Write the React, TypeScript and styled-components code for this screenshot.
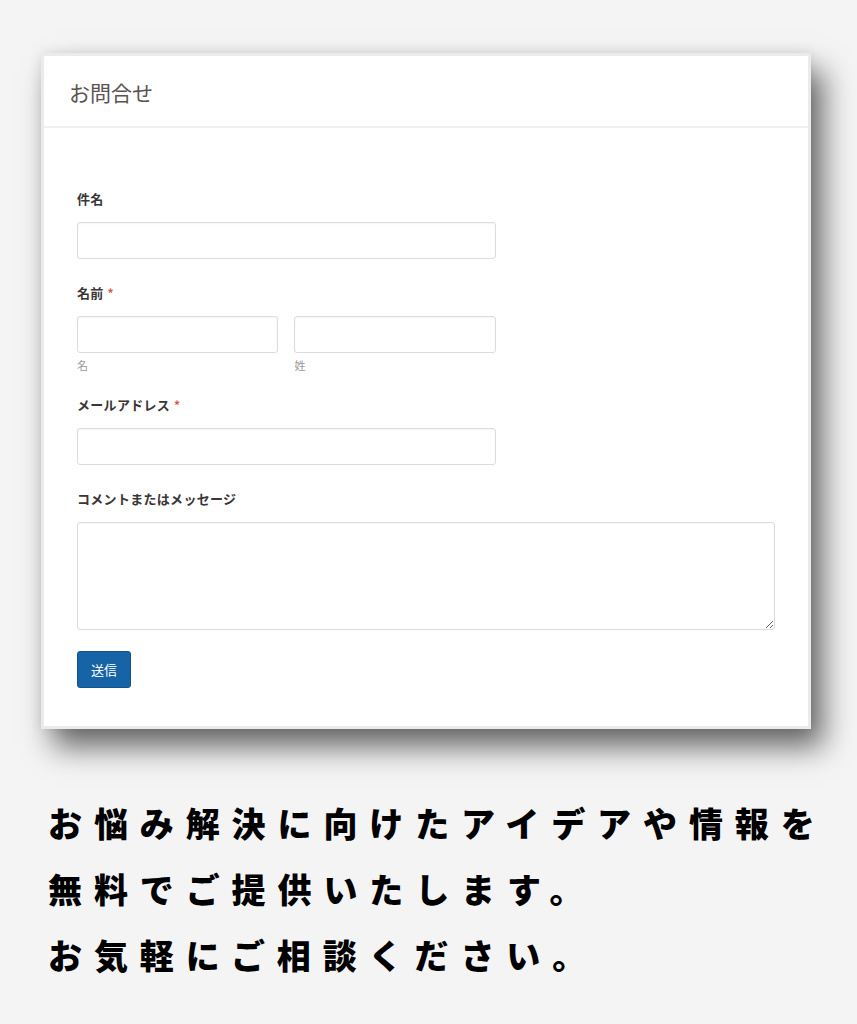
import React from "react";
import styled, { createGlobalStyle } from "styled-components";

const GlobalStyle = createGlobalStyle`
  html, body {
    margin: 0;
    padding: 0;
    background: #f4f4f4;
  }
  body {
    font-family: "Noto Sans CJK JP", "Noto Sans", sans-serif;
  }
  * { box-sizing: border-box; }
`;

const Page = styled.div`
  width: 857px;
  min-height: 1024px;
  padding: 53px 46px 0 41px;
  background: #f4f4f4;
`;

const Card = styled.section`
  background: #fff;
  border: 3px solid #ebebeb;
  box-shadow: 12px 18px 28px rgba(0, 0, 0, 0.58), 0 0 12px rgba(0, 0, 0, 0.08);
`;

const CardHeader = styled.header`
  height: 72px;
  display: flex;
  align-items: center;
  padding: 3px 25px 0;
  border-bottom: 2px solid #f0f0f0;
`;

const Title = styled.h2`
  margin: 0;
  font-size: 21px;
  font-weight: 400;
  color: #5a5353;
  line-height: 1;
`;

const Form = styled.form`
  padding: 61px 33px 38px;
  display: flex;
  flex-direction: column;
`;

const Field = styled.div<{ $gap?: number }>`
  display: flex;
  flex-direction: column;
  margin-bottom: ${(p) => p.$gap ?? 24}px;
`;

const Label = styled.label`
  font-size: 13px;
  letter-spacing: 0.3px;
  font-weight: 700;
  color: #3a3636;
  line-height: 20px;
  margin-bottom: 13px;
  display: flex;
  align-items: center;
  gap: 4px;
`;

const Req = styled.span`
  color: #d9534f;
  font-weight: 700;
  font-size: 12px;
`;

const Input = styled.input<{ $width?: string }>`
  width: ${(p) => p.$width ?? "60%"};
  height: 37px;
  border: 1px solid #dcdcdc;
  border-radius: 3px;
  background: #fff;
  box-shadow: inset 0 1px 2px rgba(0, 0, 0, 0.04);
  outline: none;
  padding: 0 8px;
  font-family: inherit;
`;

const NameRow = styled.div`
  width: 60%;
  display: grid;
  grid-template-columns: 1fr 1fr;
  column-gap: 16px;
`;

const SubField = styled.div`
  display: flex;
  flex-direction: column;
`;

const SubLabel = styled.span`
  font-size: 11px;
  color: #9a9a9a;
  line-height: 16px;
  margin-top: 4px;
`;

const TextArea = styled.textarea`
  width: 100%;
  height: 108px;
  border: 1px solid #dcdcdc;
  border-radius: 3px;
  box-shadow: inset 0 1px 2px rgba(0, 0, 0, 0.04);
  outline: none;
  font-family: inherit;
  display: block;
`;

const Button = styled.button`
  align-self: flex-start;
  width: 54px;
  height: 37px;
  margin-top: 21px;
  background: #1664a5;
  color: #fff;
  border: 1px solid #11558e;
  border-radius: 3px;
  font-family: inherit;
  font-size: 13px;
  padding: 0;
  cursor: pointer;
`;

const Message = styled.p`
  margin: 61px 0 0 7px;
  font-family: "Noto Sans CJK JP", sans-serif;
  font-size: 34px;
  font-weight: 900;
  line-height: 66px;
  letter-spacing: 11.9px;
  color: #000;
  white-space: nowrap;
`;

export default function App() {
  return (
    <>
      <GlobalStyle />
      <Page>
        <Card>
          <CardHeader>
            <Title>お問合せ</Title>
          </CardHeader>
          <Form onSubmit={(e) => e.preventDefault()}>
            <Field>
              <Label>件名</Label>
              <Input />
            </Field>
            <Field $gap={22}>
              <Label>
                名前<Req>*</Req>
              </Label>
              <NameRow>
                <SubField>
                  <Input $width="100%" />
                  <SubLabel>名</SubLabel>
                </SubField>
                <SubField>
                  <Input $width="100%" />
                  <SubLabel>姓</SubLabel>
                </SubField>
              </NameRow>
            </Field>
            <Field>
              <Label>
                メールアドレス<Req>*</Req>
              </Label>
              <Input />
            </Field>
            <Field $gap={0}>
              <Label>コメントまたはメッセージ</Label>
              <TextArea />
            </Field>
            <Button type="submit">送信</Button>
          </Form>
        </Card>
        <Message>
          お悩み解決に向けたアイデアや情報を
          <br />
          無料でご提供いたします。
          <br />
          お気軽にご相談ください。
        </Message>
      </Page>
    </>
  );
}
